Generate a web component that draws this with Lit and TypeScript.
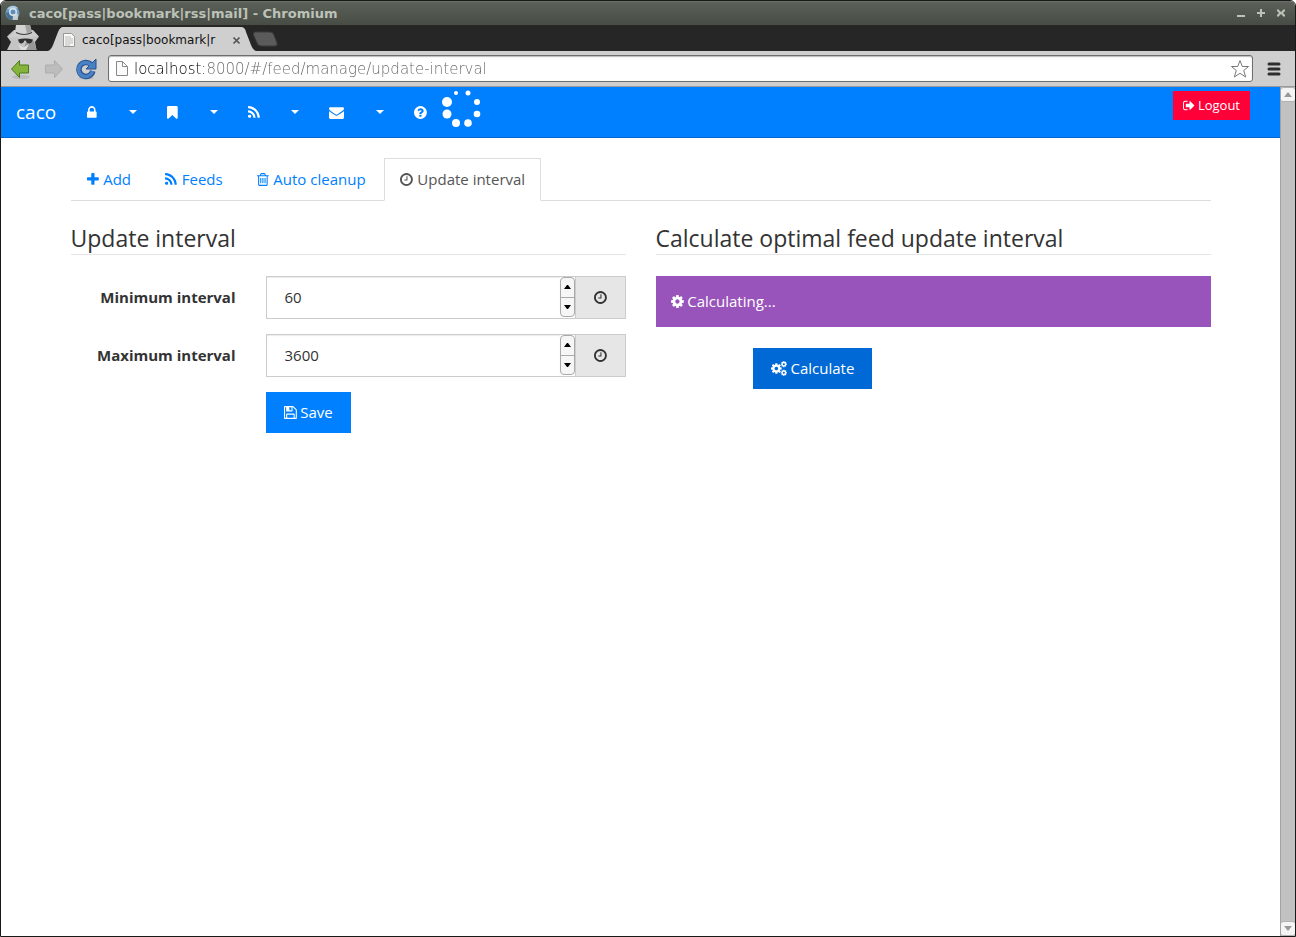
import { LitElement, html, css, svg } from "lit";
import { customElement, property, state } from "lit/decorators.js";

// Icon outlines on a 1792-unit em; x and w give the horizontal advance box.
const COG =
  "M1152 896q0-106-75-181t-181-75-181 75-75 181 75 181 181 75 181-75 75-181zm512-109v222q0 12-8 23t-20 13l-185 28q-19 54-39 91 35 50 107 138 10 12 10 25t-9 23q-27 37-99 108t-94 71q-12 0-26-9l-138-108q-44 23-91 38-16 136-29 186-7 28-36 28h-222q-14 0-24.5-8.5t-11.5-21.5l-28-184q-49-16-90-37l-141 107q-10 9-25 9-14 0-25-11-126-114-165-168-7-10-7-23 0-12 8-23 15-21 51-66.5t54-70.5q-27-50-41-99l-183-27q-13-2-21-12.5t-8-23.5v-222q0-12 8-23t19-13l186-28q14-46 39-92-40-57-107-138-10-12-10-24 0-10 9-23 26-36 98.5-107.5t94.5-71.5q13 0 26 10l138 107q44-23 91-38 16-136 29-186 7-28 36-28h222q14 0 24.5 8.5t11.5 21.5l28 184q49 16 90 37l142-107q9-9 24-9 13 0 25 10 129 119 165 170 7 8 7 22 0 12-8 23-15 21-51 66.5t-54 70.5q26 50 41 98l183 28q13 2 21 12.5t8 23.5z";

const ICONS: Record<string, { x: number; w: number; d: string }> = {
  lock: { x: 320, w: 1152, d: "M640 768h512v-192q0-106-75-181t-181-75-181 75-75 181v192zm832 96v576q0 40-28 68t-68 28h-960q-40 0-68-28t-28-68v-576q0-40 28-68t68-28h32v-192q0-184 132-316t316-132 316 132 132 316v192h32q40 0 68 28t28 68z" },
  bookmark: { x: 256, w: 1280, d: "M1420 128q23 0 44 9 33 13 52.5 41t19.5 62v1289q0 34-19.5 62t-52.5 41q-19 8-44 8-48 0-83-32l-441-424-441 424q-36 33-83 33-23 0-44-9-33-13-52.5-41t-19.5-62v-1289q0-34 19.5-62t52.5-41q21-9 44-9h1048z" },
  rss: { x: 192, w: 1408, d: "M576 1344q0 80-56 136t-136 56-136-56-56-136 56-136 136-56 136 56 56 136zm512 123q2 28-17 48-18 21-47 21h-135q-25 0-43-16.5t-20-41.5q-22-229-184.5-391.5t-391.5-184.5q-25-2-41.5-20t-16.5-43v-135q0-29 21-47 17-17 43-17h5q160 13 306 80.5t259 181.5q114 113 181.5 259t80.5 306zm512 2q2 27-18 47-18 20-46 20h-143q-26 0-44.5-17.5t-19.5-42.5q-12-215-101-408.5t-231.5-336-336-231.5-408.5-102q-25-1-42.5-19.5t-17.5-43.5v-143q0-28 20-46 18-18 44-18h3q262 13 501.5 120t425.5 294q187 186 294 425.5t120 501.5z" },
  envelope: { x: 0, w: 1792, d: "M1792 710v794q0 66-47 113t-113 47h-1472q-66 0-113-47t-47-113v-794q44 49 101 87 362 246 497 345 57 42 92.5 65.5t94.5 48 110 24.5h2q51 0 110-24.5t94.5-48 92.5-65.5q170-123 498-345 57-39 100-87zm0-294q0 79-49 151t-122 123q-376 261-468 325-10 7-42.5 31t-54 38.5-52 32.5-57.5 27-50 9h-2q-23 0-50-9t-57.5-27-52-32.5-54-38.5-42.5-31q-91-64-262-182.5t-205-142.5q-62-42-117-115.5t-55-136.5q0-78 41.5-130t118.5-52h1472q65 0 112.5 47t47.5 113z" },
  question: { x: 128, w: 1536, d: "M1024 1376v-192q0-14-9-23t-23-9h-192q-14 0-23 9t-9 23v192q0 14 9 23t23 9h192q14 0 23-9t9-23zm256-672q0-88-55.5-163t-138.5-116-170-41q-243 0-371 213-15 24 8 42l132 100q7 6 19 6 16 0 25-12 53-68 86-92 34-24 86-24 48 0 85.5 26t37.5 59q0 38-20 61t-68 45q-63 28-115.5 86.5t-52.5 125.5v36q0 14 9 23t23 9h192q14 0 23-9t9-23q0-19 21.5-49.5t54.5-49.5q32-18 49-28.5t46-35 44.5-48 28-60.5 12.5-81zm384 192q0 209-103 385.5t-279.5 279.5-385.5 103-385.5-103-279.5-279.5-103-385.5 103-385.5 279.5-279.5 385.5-103 385.5 103 279.5 279.5 103 385.5z" },
  plus: { x: 192, w: 1408, d: "M1600 736v192q0 40-28 68t-68 28h-416v416q0 40-28 68t-68 28h-192q-40 0-68-28t-28-68v-416h-416q-40 0-68-28t-28-68v-192q0-40 28-68t68-28h416v-416q0-40 28-68t68-28h192q40 0 68 28t28 68v416h416q40 0 68 28t28 68z" },
  trash: { x: 192, w: 1408, d: "M704 736v576q0 14-9 23t-23 9h-64q-14 0-23-9t-9-23v-576q0-14 9-23t23-9h64q14 0 23 9t9 23zm256 0v576q0 14-9 23t-23 9h-64q-14 0-23-9t-9-23v-576q0-14 9-23t23-9h64q14 0 23 9t9 23zm256 0v576q0 14-9 23t-23 9h-64q-14 0-23-9t-9-23v-576q0-14 9-23t23-9h64q14 0 23 9t9 23zm128 724v-948h-896v948q0 22 7 40.5t14.5 27 10.5 8.5h832q3 0 10.5-8.5t14.5-27 7-40.5zm-672-1076h448l-48-117q-7-9-17-11h-317q-10 2-17 11zm928 32v64q0 14-9 23t-23 9h-96v948q0 83-47 143.5t-113 60.5h-832q-66 0-113-58.5t-47-141.5v-952h-96q-14 0-23-9t-9-23v-64q0-14 9-23t23-9h309l70-167q15-37 54-63t79-26h320q40 0 79 26t54 63l70 167h309q14 0 23 9t9 23z" },
  clock: { x: 128, w: 1536, d: "M1024 544v448q0 14-9 23t-23 9h-320q-14 0-23-9t-9-23v-64q0-14 9-23t23-9h224v-352q0-14 9-23t23-9h64q14 0 23 9t9 23zm416 352q0-148-73-273t-198-198-273-73-273 73-198 198-73 273 73 273 198 198 273 73 273-73 198-198 73-273zm224 0q0 209-103 385.5t-279.5 279.5-385.5 103-385.5-103-279.5-279.5-103-385.5 103-385.5 279.5-279.5 385.5-103 385.5 103 279.5 279.5 103 385.5z" },
  save: { x: 128, w: 1536, d: "M512 1536h768v-384h-768v384zm896 0h128v-896q0-14-10-38.5t-20-34.5l-281-281q-10-10-34-20t-39-10v416q0 40-28 68t-68 28h-576q-40 0-68-28t-28-68v-416h-128v1280h128v-416q0-40 28-68t68-28h832q40 0 68 28t28 68v416zm-384-928v-320q0-13-9.5-22.5t-22.5-9.5h-192q-13 0-22.5 9.5t-9.5 22.5v320q0 13 9.5 22.5t22.5 9.5h192q13 0 22.5-9.5t9.5-22.5zm640 32v928q0 40-28 68t-68 28h-1344q-40 0-68-28t-28-68v-1344q0-40 28-68t68-28h928q40 0 88 20t76 48l280 280q28 28 48 76t20 88z" },
  signout: { x: 64, w: 1600, d: "M704 1440q0 4 1 20t.5 26.5-3 23.5-10 19.5-20.5 6.5h-320q-119 0-203.5-84.5t-84.5-203.5v-704q0-119 84.5-203.5t203.5-84.5h320q13 0 22.5 9.5t9.5 22.5q0 4 1 20t.5 26.5-3 23.5-10 19.5-20.5 6.5h-320q-66 0-113 47t-47 113v704q0 66 47 113t113 47h312l11.5 1 11.5 3 8 5.5 7 9 2 13.5zm928-544q0 26-19 45l-544 544q-19 19-45 19t-45-19-19-45v-288h-448q-26 0-45-19t-19-45v-384q0-26 19-45t45-19h448v-288q0-26 19-45t45-19 45 19l544 544q19 19 19 45z" },
  cog: { x: 128, w: 1536, d: COG },
};

@customElement("fa-icon")
class FaIcon extends LitElement {
  @property() name = "cog";
  static styles = css`
    :host { display: inline-block; height: 1em; line-height: 1; vertical-align: -2px; }
    svg { display: block; height: 1em; width: auto; fill: currentColor; overflow: visible; }
  `;
  render() {
    if (this.name === "cogs") {
      return html`<svg viewBox="0 0 1920 1792" aria-hidden="true">
        <path transform="translate(-107 149) scale(.834)" d=${COG} />
        ${[384, 1408].map(
          (y) => svg`<g transform="translate(1536 ${y})">
            <circle r="210" fill="none" stroke="currentColor" stroke-width="160" />
            ${[0, 45, 90, 135, 180, 225, 270, 315].map(
              (a) => svg`<rect x="-70" y="-372" width="140" height="130" transform="rotate(${a})" />`
            )}
          </g>`
        )}
      </svg>`;
    }
    const i = ICONS[this.name];
    return html`<svg viewBox="${i.x} 0 ${i.w} 1792" aria-hidden="true"><path d=${i.d} /></svg>`;
  }
}

@customElement("interval-field")
class IntervalField extends LitElement {
  @property() label = "";
  @property({ type: Number }) value = 0;
  static styles = css`
    :host { display: block; }
    .row { display: grid; grid-template-columns: minmax(0, 11fr) minmax(0, 24fr); column-gap: 30px; align-items: center; }
    .label { text-align: right; font-weight: 700; white-space: nowrap; }
    .group { display: flex; height: 43px; box-sizing: border-box; border: 1px solid #ccc; background: #fff; }
    .input {
      flex: 1; min-width: 0; border: 0; outline: 0; padding: 0 18px; font: inherit; color: #333;
      background: transparent; appearance: textfield; box-shadow: inset 0 1px 1px rgba(0, 0, 0, 0.08);
    }
    .input::-webkit-inner-spin-button { appearance: none; margin: 0; }
    .spin { display: flex; flex-direction: column; width: 15px; margin: 0 0 1px; box-sizing: border-box; border: 1px solid #aaa; border-radius: 4px; background: #f6f6f6; overflow: hidden; }
    .step { flex: 1; display: flex; align-items: center; justify-content: center; padding: 0; border: 0; background: none; color: #000; }
    .step + .step { border-top: 1px solid #aaa; }
    .addon { display: flex; align-items: center; justify-content: center; width: 50px; background: #e6e6e6; border-left: 1px solid #ccc; box-sizing: border-box; }
  `;
  render() {
    return html`<div class="row">
      <label class="label" for="field">${this.label}</label>
      <div class="group">
        <input class="input" id="field" type="number" .value=${String(this.value)}
          @input=${(e: Event) => (this.value = Number((e.target as HTMLInputElement).value))} />
        <div class="spin">
          <button class="step" type="button" tabindex="-1" aria-label="Increase" @click=${() => this.value++}>
            <svg width="7" height="4" viewBox="0 0 7 4"><path d="M3 0h1l3 4H0z" /></svg>
          </button>
          <button class="step" type="button" tabindex="-1" aria-label="Decrease" @click=${() => this.value--}>
            <svg width="7" height="4" viewBox="0 0 7 4"><path d="M0 0h7L4 4H3z" /></svg>
          </button>
        </div>
        <span class="addon"><fa-icon name="clock"></fa-icon></span>
      </div>
    </div>`;
  }
}

@customElement("browser-chrome")
class BrowserChrome extends LitElement {
  static styles = css`
    :host { display: block; font-family: "DejaVu Sans", sans-serif; }
    .title { display: flex; align-items: center; height: 24px; padding: 0 8px 0 4px; background: linear-gradient(#6b7168, #5a6057 8%, #474c45); color: #bcc2b8; font-size: 13px; font-weight: 700; }
    .name { flex: 1; margin-left: 8px; }
    .controls { display: flex; gap: 8px; }
    .ctl { display: flex; padding: 0; border: 0; background: none; color: inherit; }
    .strip { display: flex; height: 26px; padding-left: 5px; background: #262626; }
    .spy { margin-right: 8px; }
    .tab { position: relative; display: flex; align-items: center; width: 208px; box-sizing: border-box; padding: 4px 15px 0 14px; font-size: 12px; color: #111; }
    .shape { position: absolute; inset: 0; }
    .page, .text, .close { position: relative; }
    .text { flex: 1; margin-left: 6px; white-space: nowrap; }
    .close { display: flex; padding: 0; border: 0; background: none; }
    .new { display: flex; padding: 6px 0 0; border: 0; background: none; margin-left: -4px; }
    .bar { display: flex; align-items: center; height: 36px; padding: 0 14px 0 8px; background: #cfcfcf; border-bottom: 1px solid #9a9a9a; box-sizing: border-box; }
    .nav { display: flex; padding: 0; border: 0; background: none; margin-right: 11px; }
    .omni { flex: 1; display: flex; align-items: center; height: 27px; box-sizing: border-box; border: 1px solid #6e6e6e; border-radius: 3px; background: #fff; padding: 0 2px 0 6px; margin-right: 14px; box-shadow: inset 0 1px 1px #bbb; }
    .url {
      flex: 1; min-width: 0; height: 24px; border: 0; outline: 0; padding: 0; margin-left: 5px;
      font-family: "DejaVu Sans", sans-serif; font-size: 15px; font-weight: 200;
      color: transparent; background: linear-gradient(90deg, #000 70px, #666 70px); background-clip: text; -webkit-background-clip: text;
    }
  `;
  render() {
    return html`
      <div class="title">
        <svg width="16" height="16" viewBox="0 0 16 16">
          <circle cx="7.500" cy="8" r="7" fill="#6f9cc0" />
          <path d="M2 4a7 7 0 0 1 11-1L8 5z" fill="#a9cbe2" />
          <path d="M1 8a7 7 0 0 0 6 7l1-5-4-3z" fill="#456f93" />
          <circle cx="8" cy="7" r="4" fill="#d8e6ef" /><circle cx="8" cy="7" r="2.500" fill="#5d8fb8" />
          <path d="M8 9h5v6H8z" fill="#d9dcd5" opacity=".8" />
        </svg>
        <span class="name">caco[pass|bookmark|rss|mail] - Chromium</span>
        <div class="controls">
          ${["M2 8h8v2H2z", "M5 2h2v3h3v2H7v3H5V7H2V5h3z", "M2 3l1-1 3 3 3-3 1 1v1L8 6l2 2v1l-1 1-3-3-3 3-1-1V8l2-2-2-2z"].map(
            (d, i) => html`<button class="ctl" aria-label=${["Minimise", "Maximise", "Close"][i]}>
              <svg width="12" height="12" viewBox="0 0 12 12"><path d=${d} fill="currentColor" /></svg>
            </button>`
          )}
        </div>
      </div>
      <div class="strip">
        <svg class="spy" width="34" height="26" viewBox="0 0 34 26">
          <path d="M8 5h19l6 6.500-4 5.500 1.500 8H1l4-8-4-5.500z" fill="#c4c4c4" />
          <path d="M20 17l8-1 2.500 9H17z" fill="#989898" />
          <path d="M10 0h14l2 7q-9 4-17 0z" fill="#d3d3d3" />
          <path d="M19 0h5l2 7-5 1.500z" fill="#a2a2a2" />
          <path d="M9 6q8 5 18 0l5 5q-15 3-29 1z" fill="#cdcdcd" />
          <path d="M10 7.500q8 4 16 0" fill="none" stroke="#3c3c3c" stroke-width="1.200" />
          <path d="M12 14.500q7-2 15 0-1 4-4 4-2 0-3.500-3h-1q-1 3-3.500 3-2 0-3-4z" fill="#303030" />
          <path d="M12 19l5 3.500 6-3.500-3 6h-5z" fill="#dedede" />
        </svg>
        <div class="tab">
          <svg class="shape" width="208" height="26" viewBox="0 0 208 26">
            <path d="M0 26q3-1 5-6l5-13q2-5 5-5h178q4 0 5 5l5 13q2 5 5 6z" fill="#cfcfcf" />
          </svg>
          <svg class="page" width="14" height="16" viewBox="0 0 14 16">
            <path d="M1.500 1.500h8l3 3v10h-11z" fill="#f8f8f6" stroke="#999" />
            <path d="M3 5h6M3 7h8M3 9h8M3 11h8M3 13h5" stroke="#bbb" />
          </svg>
          <span class="text">caco[pass|bookmark|r</span>
          <button class="close" aria-label="Close tab">
            <svg width="9" height="9" viewBox="0 0 9 9"><path d="M1.500 1.500l6 6m0-6l-6 6" stroke="#555" stroke-width="1.700" /></svg>
          </button>
        </div>
        <button class="new" aria-label="New tab">
          <svg width="26" height="16" viewBox="0 0 26 16">
            <path d="M3 1h15q3 0 4 3l3 8q1 3-2 3H9q-3 0-4-3L1.500 4Q1 1 3 1z" fill="#5b5b5b" stroke="#3a3a3a" />
          </svg>
        </button>
      </div>
      <div class="bar">
        <button class="nav" aria-label="Back">
          <svg width="22" height="22" viewBox="0 0 22 22"><ellipse cx="12" cy="19" rx="9" ry="2" fill="#bbb" /><path d="M2.500 11l8-8.500v4.500h9v8h-9v4.500z" fill="#86b33c" stroke="#4c7a1c" /></svg>
        </button>
        <button class="nav" aria-label="Forward">
          <svg width="22" height="22" viewBox="0 0 22 22"><path d="M20.500 11l-8-8.500v4.500h-9v8h9v4.500z" fill="#bdbdbd" stroke="#adadad" /></svg>
        </button>
        <button class="nav" aria-label="Reload">
          <svg width="22" height="22" viewBox="0 0 22 22">
            <ellipse cx="11" cy="20" rx="8" ry="1.500" fill="#bbb" />
            <path d="M16 6.500A7 7 0 1 0 17.800 13" fill="none" stroke="#27518d" stroke-width="5.500" />
            <path d="M21 1v10H11z" fill="#4a80c4" stroke="#27518d" />
            <path d="M16 7A7 7 0 1 0 17.500 13" fill="none" stroke="#4a80c4" stroke-width="3.500" />
          </svg>
        </button>
        <div class="omni">
          <svg width="14" height="17" viewBox="0 0 14 17"><path d="M1.500 1.500h6l5 5v9h-11zM7.500 1.500v5h5" fill="#fafafa" stroke="#888" /></svg>
          <input class="url" aria-label="Address" value="localhost:8000/#/feed/manage/update-interval" />
          <svg width="20" height="20" viewBox="0 0 20 20"><path d="M10 1.500l2.300 6h6.200l-4.800 4 2 6.500L10 14.300 4.300 18l2-6.500-4.800-4h6.200z" fill="#fff" stroke="#777" stroke-linejoin="round" /></svg>
        </div>
        <button class="ctl" aria-label="Menu">
          <svg width="14" height="14" viewBox="0 0 14 14"><path d="M2 2h10M2 7h10M2 12h10" stroke="#2e2e2e" stroke-width="3" stroke-linecap="round" /></svg>
        </button>
      </div>
    `;
  }
}

@customElement("app-root")
class AppRoot extends LitElement {
  @state() private tab = 3;
  static styles = css`
    :host { display: block; background: #fff; }
    .window { display: flex; flex-direction: column; height: 100vh; box-sizing: border-box; border: 1px solid #181a17; border-radius: 6px 6px 0 0; overflow: hidden; }
    .view { flex: 1; min-height: 0; display: flex; }
    .page { flex: 1; min-width: 0; overflow: auto; background: #fff; color: #333; font-family: "Open Sans", "Noto Sans", sans-serif; font-size: 15px; line-height: 21px; }
    .navbar { display: flex; height: 51px; box-sizing: border-box; background: #007fff; border-bottom: 1px solid #0066cc; color: #fff; }
    .navbar a { display: flex; align-items: center; padding: 0 15px; color: #fff; text-decoration: none; }
    .navbar .brand { font-size: 19px; padding-right: 16px; }
    .caret { margin-left: 2px; border: 4px solid transparent; border-top-color: #fff; border-bottom: 0; }
    .loader { margin-top: 3px; }
    .logout { margin: 4px 30px 0 auto; height: 29px; padding: 0 10px; border: 0; background: #ff0039; color: #fff; font: inherit; font-size: 13px; }
    .container { max-width: 1140px; margin: 0 auto; padding: 20px 15px; }
    .tabs { display: flex; gap: 2px; border-bottom: 1px solid #ddd; }
    .tab { padding: 10px 15px; margin-bottom: -1px; border: 1px solid transparent; color: #007fff; text-decoration: none; white-space: nowrap; }
    .tab fa-icon { margin-right: 1px; }
    .tab.active { color: #555; background: #fff; border-color: #ddd #ddd #fff; }
    .columns { display: grid; grid-template-columns: repeat(auto-fit, minmax(min(100%, 460px), 1fr)); column-gap: 30px; margin-top: 21px; }
    .heading { margin: 0 0 21px; padding-bottom: 0; font-size: 23px; line-height: 32px; font-weight: 400; border-bottom: 1px solid #e5e5e5; }
    .form { display: grid; row-gap: 15px; }
    .actions { display: grid; grid-template-columns: minmax(0, 11fr) minmax(0, 24fr); column-gap: 30px; }
    .btn { height: 41px; padding: 0 18px; border: 0; background: #007fff; color: #fff; font: inherit; white-space: nowrap; }
    .save { grid-column: 2; justify-self: start; }
    .alert { padding: 15px; background: #9954bb; color: #fff; margin-bottom: 21px; }
    .calc { background: #0069d6; }
    .offset { display: grid; grid-template-columns: minmax(0, 97fr) minmax(0, 458fr); }
    .offset .btn { grid-column: 2; justify-self: start; }
    .scroll { display: flex; flex-direction: column; width: 15px; background: #c1c1c1; border-left: 1px solid #a3a3a3; box-sizing: border-box; }
    .arrow { display: flex; align-items: center; justify-content: center; height: 15px; padding: 0; border: 1px solid #b0b0b0; border-width: 1px 0; border-radius: 3px; background: #f4f4f4; }
    .thumb { flex: 1; }
  `;
  render() {
    const dots = [[14, 3, 2], [26, 3, 2.5], [35, 12, 3], [35, 24, 3.3], [26, 33, 3.8], [14, 33, 4], [5, 24, 4.5], [5, 12, 5]];
    const tabs = [["plus", "Add"], ["rss", "Feeds"], ["trash", "Auto cleanup"], ["clock", "Update interval"]];
    return html`<div class="window">
      <browser-chrome></browser-chrome>
      <div class="view">
        <main class="page">
          <nav class="navbar">
            <a class="brand" href="#">caco</a>
            ${["lock", "bookmark", "rss", "envelope"].map(
              (n) => html`<a href="#" aria-label=${n}><fa-icon name=${n}></fa-icon></a>
                <a href="#" aria-label="${n} menu"><span class="caret"></span></a>`
            )}
            <a href="#" aria-label="help"><fa-icon name="question"></fa-icon></a>
            <svg class="loader" width="40" height="38" viewBox="0 0 40 38" fill="#fff">
              ${dots.map(([x, y, r]) => svg`<circle cx=${x} cy=${y} r=${r} />`)}
            </svg>
            <button class="logout"><fa-icon name="signout"></fa-icon> Logout</button>
          </nav>
          <div class="container">
            <div class="tabs">
              ${tabs.map(
                ([icon, text], i) => html`<a class="tab ${i === this.tab ? "active" : ""}" href="#"
                  @click=${(e: Event) => { e.preventDefault(); this.tab = i; }}><fa-icon name=${icon}></fa-icon> ${text}</a>`
              )}
            </div>
            <div class="columns">
              <section>
                <h2 class="heading">Update interval</h2>
                <form class="form" @submit=${(e: Event) => e.preventDefault()}>
                  <interval-field label="Minimum interval" value="60"></interval-field>
                  <interval-field label="Maximum interval" value="3600"></interval-field>
                  <div class="actions"><button class="btn save"><fa-icon name="save"></fa-icon> Save</button></div>
                </form>
              </section>
              <section>
                <h2 class="heading">Calculate optimal feed update interval</h2>
                <div class="alert" role="status"><fa-icon name="cog"></fa-icon> Calculating...</div>
                <div class="offset"><button class="btn calc"><fa-icon name="cogs"></fa-icon> Calculate</button></div>
              </section>
            </div>
          </div>
        </main>
        <div class="scroll">
          <button class="arrow" aria-label="Scroll up"><svg width="8" height="5" viewBox="0 0 8 5"><path d="M4 0l4 5H0z" fill="#999" /></svg></button>
          <div class="thumb"></div>
          <button class="arrow" aria-label="Scroll down"><svg width="8" height="5" viewBox="0 0 8 5"><path d="M0 0h8L4 5z" fill="#999" /></svg></button>
        </div>
      </div>
    </div>`;
  }
}
